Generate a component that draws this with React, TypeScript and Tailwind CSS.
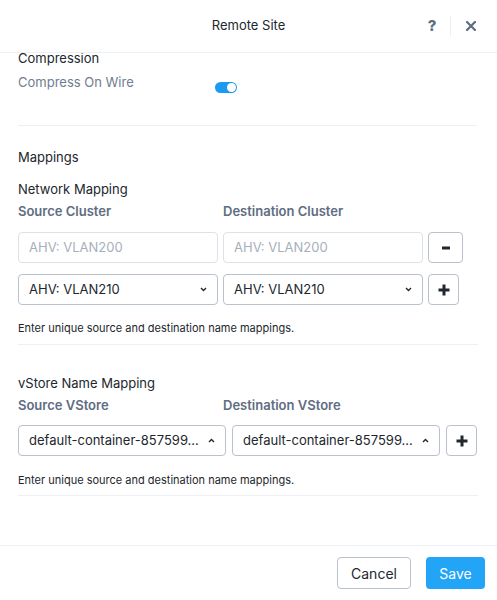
import React from "react";

const font = { fontFamily: "Inter, Lato, 'Liberation Sans', sans-serif" };

function Chevron({ up }: { up?: boolean }) {
  return (
    <svg width="7" height="5" viewBox="0 0 7 5" className="shrink-0">
      {up ? (
        <path d="M1 4 L3.5 1.5 L6 4" fill="none" stroke="#22272e" strokeWidth="1.4" />
      ) : (
        <path d="M1 1 L3.5 3.5 L6 1" fill="none" stroke="#22272e" strokeWidth="1.4" />
      )}
    </svg>
  );
}

function Select({ value, width, up }: { value: string; width: string; up?: boolean }) {
  return (
    <div
      className={`${width} h-[31px] flex items-center justify-between rounded-[4px] border border-[#b9c1cc] bg-white pl-[10px] pr-[10px] text-[13px] text-[#22272e]`}
    >
      <span className="truncate">{value}</span>
      <Chevron up={up} />
    </div>
  );
}

function IconButton({ kind, width }: { kind: "plus" | "minus"; width: string }) {
  return (
    <div
      className={`${width} h-[31px] flex items-center justify-center rounded-[4px] border border-[#b9c1cc] bg-white`}
    >
      <svg width="12" height="12" viewBox="0 0 12 12">
        {kind === "plus" && <rect x="4.5" y="0.5" width="3" height="11" fill="#22272e" />}
        <rect x={kind === "plus" ? 0.5 : 2} y="4.5" width={kind === "plus" ? 11 : 8} height="3" fill="#22272e" />
      </svg>
    </div>
  );
}

export default function App() {
  return (
    <div className="h-[600px] w-[497px] flex flex-col bg-white overflow-hidden" style={font}>
      {/* Header */}
      <div className="relative h-[53px] shrink-0 flex items-center justify-center border-b border-[#eceff3]">
        <span className="text-[13px] text-[#22272e]">Remote Site</span>
        <div className="absolute right-[21px] top-0 h-full flex items-center">
          <span className="text-[15px] font-extrabold text-[#5e6d82] w-[12px] text-center">?</span>
          <div className="ml-[12px] mr-[15px] h-[21px] w-px bg-[#eceff3]" />
          <svg width="10" height="10" viewBox="0 0 10 10">
            <path d="M1 1 L9 9 M9 1 L1 9" stroke="#5e6d82" strokeWidth="2.2" strokeLinecap="square" />
          </svg>
        </div>
      </div>

      {/* Body */}
      <div className="flex-1 min-h-0">
        <div className="pl-[18px] pr-[19px]">
          <div className="text-[13px] leading-[10px] text-[#22272e]">Compression</div>
          <div className="mt-[11px] flex items-start">
            <div className="w-[197px] text-[13px] leading-[16px] text-[#6f7d91]">Compress On Wire</div>
            <div className="mt-[8px] h-[11px] w-[22px] rounded-full bg-[#1b9bf0] relative">
              <div className="absolute right-[1px] top-[1px] h-[9px] w-[9px] rounded-full bg-white" />
            </div>
          </div>
          <div className="mt-[32px] border-t border-[#eceff3] mr-[1px]" />

          <div className="mt-[23px] text-[13px] leading-[16px] text-[#22272e]">Mappings</div>
          <div className="mt-[16px] text-[13px] leading-[16px] text-[#22272e]">Network Mapping</div>
          <div className="mt-[6px] flex text-[13px] leading-[16px] font-semibold text-[#5e6d82]">
            <span className="w-[205px]">Source Cluster</span>
            <span>Destination Cluster</span>
          </div>

          <div className="mt-[13px] flex gap-[5px]">
            <div className="w-[200px] h-[31px] flex items-center rounded-[4px] border border-[#dde2e8] pl-[10px] text-[13px] text-[#a7afba]">
              AHV: VLAN200
            </div>
            <div className="w-[200px] h-[31px] flex items-center rounded-[4px] border border-[#dde2e8] pl-[10px] text-[13px] text-[#a7afba]">
              AHV: VLAN200
            </div>
            <IconButton kind="minus" width="w-[35px]" />
          </div>
          <div className="mt-[11px] flex gap-[5px]">
            <Select value="AHV: VLAN210" width="w-[200px]" />
            <Select value="AHV: VLAN210" width="w-[200px]" />
            <IconButton kind="plus" width="w-[31px]" />
          </div>
          <div className="mt-[16px] text-[11px] leading-[14px] text-[#22272e]">
            Enter unique source and destination name mappings.
          </div>
          <div className="mt-[9px] border-t border-[#eceff3]" />

          <div className="mt-[30px] text-[13px] leading-[16px] text-[#22272e]">vStore Name Mapping</div>
          <div className="mt-[6px] flex text-[13px] leading-[16px] font-semibold text-[#5e6d82]">
            <span className="w-[205px]">Source VStore</span>
            <span>Destination VStore</span>
          </div>
          <div className="mt-[12px] flex gap-[6px]">
            <Select value="default-container-857599..." width="w-[208px]" up />
            <Select value="default-container-857599..." width="w-[208px]" up />
            <IconButton kind="plus" width="w-[31px]" />
          </div>
          <div className="mt-[17px] text-[11px] leading-[14px] text-[#22272e]">
            Enter unique source and destination name mappings.
          </div>
          <div className="mt-[8px] border-t border-[#eceff3]" />
        </div>
      </div>

      {/* Footer */}
      <div className="h-[55px] shrink-0 border-t border-[#eceff3] flex justify-end items-start pt-[11px] pr-[12px] gap-[15px]">
        <button className="h-[32px] w-[74px] rounded-[4px] border border-[#b9c1cc] bg-white text-[14px] text-[#22272e]">
          Cancel
        </button>
        <button className="h-[32px] w-[59px] rounded-[4px] bg-[#22a5f7] text-[14px] text-white">
          Save
        </button>
      </div>
    </div>
  );
}
